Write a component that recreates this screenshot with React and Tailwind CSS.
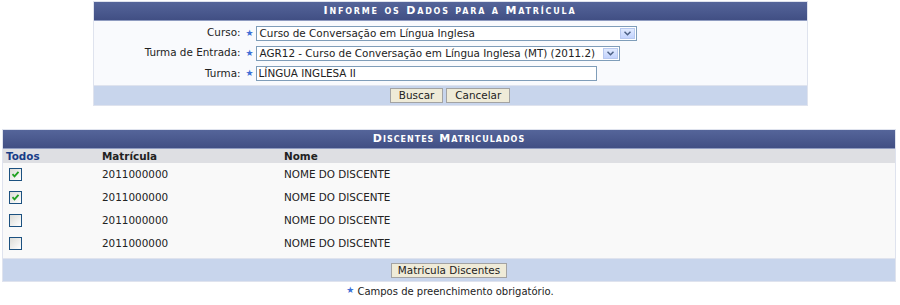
import React from "react";

const Star = ({ className = "" }) => (
  <span className={"text-[#3d6fd6] text-[9px] leading-none " + className}>★</span>
);

const SelectBox = ({ value, width }) => (
  <div
    className="flex h-[15px] items-center overflow-hidden border border-[#7f9db9] bg-white"
    style={{ width }}
  >
    <span className="flex-1 overflow-hidden whitespace-nowrap pl-[3px] leading-[13px]">{value}</span>
    <span className="m-[1px] flex h-[11px] w-[15px] shrink-0 items-center justify-center border border-[#b8c9ef] bg-linear-to-b from-[#e1eafe] to-[#c3d3fd]">
      <svg width="7" height="5" viewBox="0 0 7 5">
        <path d="M0.5 0.8 L3.5 3.8 L6.5 0.8" fill="none" stroke="#4d6185" strokeWidth="1.5" />
      </svg>
    </span>
  </div>
);

const Check = ({ checked }) => (
  <span className="flex h-[13px] w-[13px] items-center justify-center border border-[#1c5180] bg-linear-to-br from-[#dcdcd7] to-white">
    {checked && (
      <svg width="9" height="9" viewBox="0 0 9 9">
        <path d="M1.5 4.2 L3.5 6.3 L7.5 1.8" fill="none" stroke="#21a121" strokeWidth="1.8" />
      </svg>
    )}
  </span>
);

const Btn = ({ children, className = "px-[6px]" }) => (
  <button className={"h-[15px] border border-[#a3a3a3] bg-[#efebd8] text-[10.4px] leading-[13px] text-[#222] " + className}>
    {children}
  </button>
);

const Header = ({ children, className = "tracking-[1px]" }) => (
  <div className={"flex h-[19px] items-center justify-center border-b border-[#8f9bc0] bg-linear-to-b from-[#55659a] to-[#414f84] text-[11px] font-bold text-white [font-variant:small-caps] " + className}>
    {children}
  </div>
);

export default function App() {
  const rows = [true, true, false, false];
  return (
    <div className="min-h-[305px] bg-white pt-[1px] font-['DejaVu_Sans','Verdana',sans-serif] text-[10.4px] text-[#222]">
      <div className="mx-auto w-[715px] border border-[#dfe3ee]">
        <Header className="tracking-[1.8px]">Informe os Dados para a Matrícula</Header>
        <div className="flex flex-col gap-[6px] bg-[#f9fafd] pb-[4px] pt-[5px]">
          <div className="flex h-[14px] items-center">
            <span className="w-[147px] text-right">Curso:</span>
            <Star className="ml-[5px] mr-[2px]" />
            <SelectBox value="Curso de Conversação em Língua Inglesa" width={381} />
          </div>
          <div className="flex h-[14px] items-center">
            <span className="w-[147px] text-right">Turma de Entrada:</span>
            <Star className="ml-[5px] mr-[2px]" />
            <SelectBox value="AGR12 - Curso de Conversação em Língua Inglesa (MT) (2011.2)" width={364} />
          </div>
          <div className="flex h-[15px] items-center">
            <span className="w-[147px] text-right">Turma:</span>
            <Star className="ml-[5px] mr-[2px]" />
            <div className="h-[15px] w-[341px] border border-[#7f9db9] bg-white pl-[2px] leading-[13px]">
              LÍNGUA INGLESA II
            </div>
          </div>
        </div>
        <div className="flex h-[20px] items-center justify-center gap-[3px] border-t border-[#dfe3ee] bg-[#c8d5ec]">
          <Btn className="px-[8px]">Buscar</Btn>
          <Btn className="px-[8px]">Cancelar</Btn>
        </div>
      </div>

      <div className="ml-[2px] mt-[23px] w-[894px] border border-[#dfe3ee]">
        <Header>Discentes Matriculados</Header>
        <div className="grid h-[14px] grid-cols-[99px_182px_1fr] items-center bg-[#dedfe3] font-bold">
          <span className="pl-[3px] text-[#163c88]">Todos</span>
          <span>Matrícula</span>
          <span>Nome</span>
        </div>
        <div className="bg-[#f9f9f9] pb-[3px]">
          {rows.map((c, i) => (
            <div key={i} className="grid h-[23px] grid-cols-[99px_182px_1fr] items-center">
              <span className="pl-[6px]">
                <Check checked={c} />
              </span>
              <span>2011000000</span>
              <span>NOME DO DISCENTE</span>
            </div>
          ))}
        </div>
        <div className="flex h-[23px] items-center justify-center border-t border-[#dfe3ee] bg-[#c8d5ec]">
          <Btn>Matricula Discentes</Btn>
        </div>
      </div>
      <div className="mt-[2px] flex items-center justify-center gap-[3px] text-[10px] text-[#222]">
        <Star className="-mt-[3px]" />
        <span>Campos de preenchimento obrigatório.</span>
      </div>
    </div>
  );
}
